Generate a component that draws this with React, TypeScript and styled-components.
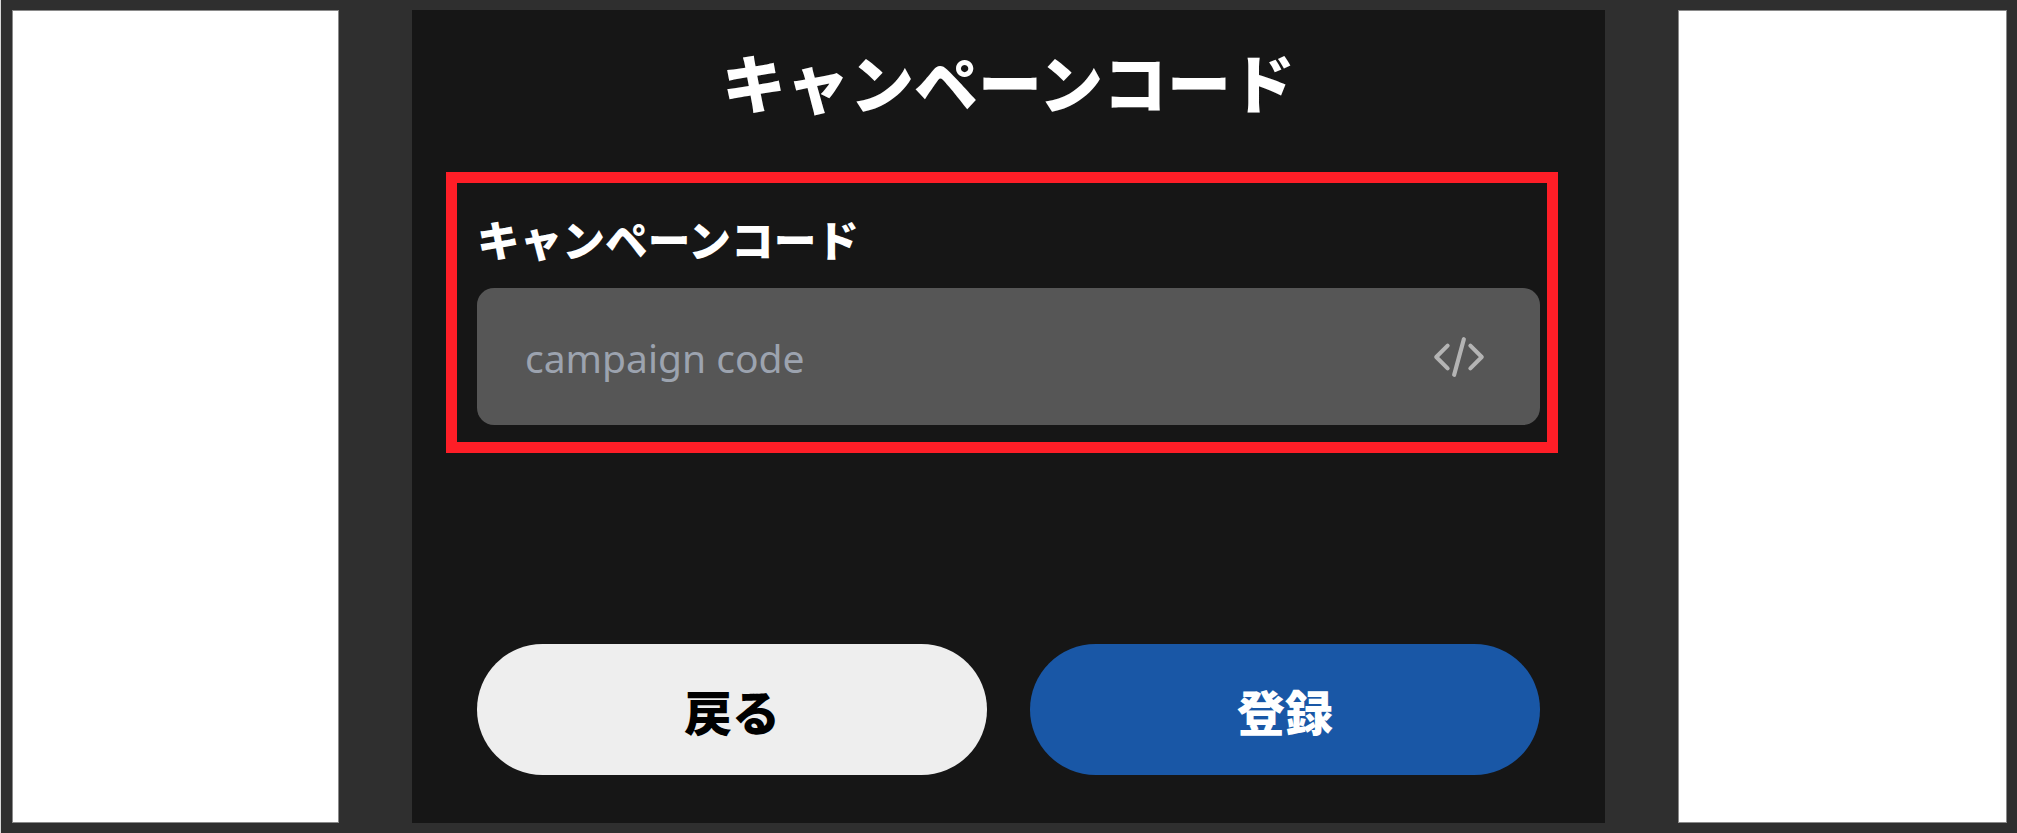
import React from "react";
import styled, { createGlobalStyle } from "styled-components";
import { HiOutlineCodeBracket } from "react-icons/hi2";

const GlobalStyle = createGlobalStyle`
  html, body {
    margin: 0;
    padding: 0;
    background-color: #2f2f2f;
  }
`;

const Page = styled.div`
  display: flex;
  justify-content: space-between;
  box-sizing: border-box;
  width: 2017px;
  height: 833px;
  padding: 10px 10px 10px 11px;
  border-left: 1px solid #d8d8d8;
  background-color: #2f2f2f;
  font-family: "Noto Sans CJK JP", "DejaVu Sans", sans-serif;
`;

const SidePanel = styled.div`
  box-sizing: border-box;
  width: ${(p) => p.$width}px;
  background-color: #fff;
  border: 1px solid #8a8a8a;
`;

const Dialog = styled.main`
  display: flex;
  flex-direction: column;
  box-sizing: border-box;
  width: 1193px;
  padding: 0 65px 48px;
  background-color: #161616;
`;

const Title = styled.h1`
  margin: 25px 0 0;
  color: #fff;
  font-size: 64px;
  font-weight: 900;
  line-height: 90px;
  text-align: center;
`;

const Field = styled.div`
  position: relative;
  margin-top: 83px;
`;

const Highlight = styled.div`
  position: absolute;
  top: -36px;
  left: -31px;
  right: -18px;
  bottom: -28px;
  border: 11px solid #ff1e27;
  pointer-events: none;
`;

const Label = styled.label`
  display: block;
  color: #fff;
  font-size: 42.7px;
  font-weight: 900;
  line-height: 60px;
`;

const InputWrapper = styled.div`
  display: flex;
  align-items: center;
  height: 137px;
  margin-top: 20px;
  padding: 0 55px 0 48px;
  border-radius: 17px;
  background-color: #565656;
`;

const CodeInput = styled.input`
  flex: 1;
  min-width: 0;
  border: none;
  outline: none;
  padding: 2px 0 0;
  background: transparent;
  color: #fff;
  font-family: "Noto Sans", sans-serif;
  font-size: 39px;

  &::placeholder {
    color: #9ca3af;
    opacity: 1;
  }
`;

const CodeIcon = styled(HiOutlineCodeBracket)`
  color: #b4b4b4;
  stroke-width: 1.9;
`;

const ButtonRow = styled.div`
  display: grid;
  grid-template-columns: 1fr 1fr;
  gap: 43px;
  margin-top: auto;
`;

const ActionButton = styled.button`
  height: 131px;
  border: none;
  border-radius: 66px;
  background-color: ${(p) => (p.$primary ? "#1957a6" : "#eeeeee")};
  color: ${(p) => (p.$primary ? "#fff" : "#000")};
  font-family: inherit;
  font-size: 48px;
  font-weight: 900;
  cursor: pointer;
`;

const App: React.FC = () => {
  return (
    <>
      <GlobalStyle />
      <Page>
        <SidePanel $width={327} />
        <Dialog>
          <Title>キャンペーンコード</Title>
          <Field>
            <Highlight />
            <Label htmlFor="campaign">キャンペーンコード</Label>
            <InputWrapper>
              <CodeInput id="campaign" placeholder="campaign code" />
              <CodeIcon size={52} />
            </InputWrapper>
          </Field>
          <ButtonRow>
            <ActionButton>戻る</ActionButton>
            <ActionButton $primary>登録</ActionButton>
          </ButtonRow>
        </Dialog>
        <SidePanel $width={329} />
      </Page>
    </>
  );
};

export default App;
